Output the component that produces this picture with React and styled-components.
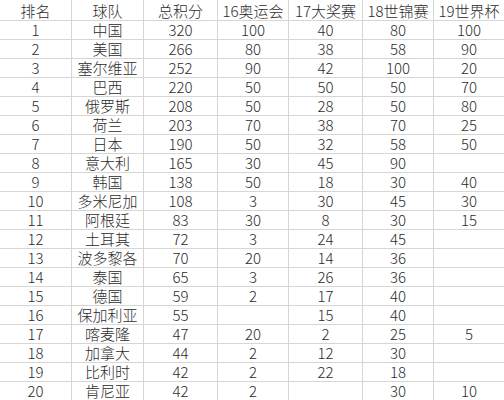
import React from 'react';
import styled, { createGlobalStyle } from 'styled-components';

const GlobalStyle = createGlobalStyle`
    html, body {
        margin: 0;
        padding: 0;
        background: #ffffff;
    }
    body {
        font-family: "Noto Sans CJK SC", "Noto Sans", sans-serif;
    }
`;

const columns = ['排名', '球队', '总积分', '16奥运会', '17大奖赛', '18世锦赛', '19世界杯'];

const rows = [
    [1, '中国', 320, 100, 40, 80, 100],
    [2, '美国', 266, 80, 38, 58, 90],
    [3, '塞尔维亚', 252, 90, 42, 100, 20],
    [4, '巴西', 220, 50, 50, 50, 70],
    [5, '俄罗斯', 208, 50, 28, 50, 80],
    [6, '荷兰', 203, 70, 38, 70, 25],
    [7, '日本', 190, 50, 32, 58, 50],
    [8, '意大利', 165, 30, 45, 90, ''],
    [9, '韩国', 138, 50, 18, 30, 40],
    [10, '多米尼加', 108, 3, 30, 45, 30],
    [11, '阿根廷', 83, 30, 8, 30, 15],
    [12, '土耳其', 72, 3, 24, 45, ''],
    [13, '波多黎各', 70, 20, 14, 36, ''],
    [14, '泰国', 65, 3, 26, 36, ''],
    [15, '德国', 59, 2, 17, 40, ''],
    [16, '保加利亚', 55, '', 15, 40, ''],
    [17, '喀麦隆', 47, 20, 2, 25, 5],
    [18, '加拿大', 44, 2, 12, 30, ''],
    [19, '比利时', 42, 2, 22, 18, ''],
    [20, '肯尼亚', 42, 2, '', 30, 10],
];

const Sheet = () => (
    <Grid>
        {columns.map((c, i) => (
            <HeadCell key={c} $last={i === columns.length - 1}>{c}</HeadCell>
        ))}
        {rows.map(r =>
            r.map((v, i) => (
                <Cell key={r[0] + '-' + i} $last={i === r.length - 1}>{v}</Cell>
            ))
        )}
    </Grid>
);

export default function App() {
    return (
        <>
            <GlobalStyle />
            <Sheet />
        </>
    );
}

const Grid = styled.div`
    display: grid;
    grid-template-columns: 72px 72px 74px 71px 74px 71px 70px;
    width: 504px;
    height: 400px;
    overflow: hidden;
    color: #2b2b2b;
    font-size: 15px;
    font-weight: 300;
`;

const Cell = styled.div`
    box-sizing: border-box;
    height: 19px;
    border-bottom: 1px solid #d6d6d6;
    border-right: ${p => (p.$last ? 'none' : '1px solid #d6d6d6')};
    display: flex;
    align-items: center;
    justify-content: center;
    line-height: 18px;
    white-space: nowrap;
    overflow: visible;
`;

const HeadCell = styled(Cell)`
    height: 21px;
    padding-top: 2px;
`;
